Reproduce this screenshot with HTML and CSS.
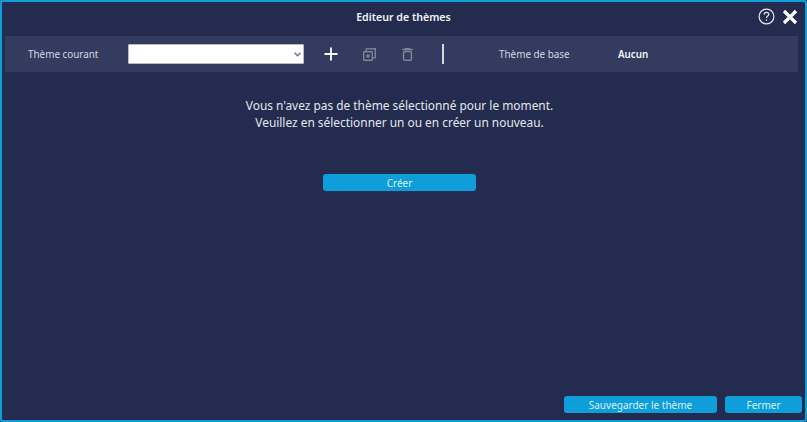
FILE: index.html
```html
<!DOCTYPE html>
<html lang="fr">
<head>
<meta charset="utf-8">
<title>Editeur de thèmes</title>
<link rel="stylesheet" href="styles.css">
</head>
<body>
<div class="dialog">
  <header class="titlebar">
    <h1 class="title">Editeur de thèmes</h1>
    <div class="title-actions">
      <svg class="icon-help" width="17" height="17" viewBox="0 0 17 17" fill="none" stroke="#e6e8ee" stroke-width="1.2" aria-label="Aide">
        <circle cx="8.5" cy="8.5" r="7.4"/>
        <path d="M6.2 6.6c0-1.4 1-2.2 2.3-2.2s2.3.8 2.3 2c0 1.7-2.3 1.7-2.3 3.6"/>
        <path d="M8.5 11.4v1.4"/>
      </svg>
      <svg class="icon-close" width="16" height="16" viewBox="0 0 16 16" fill="none" stroke="#ffffff" stroke-width="3.2" aria-label="Fermer">
        <path d="M2 2l12 12M14 2L2 14"/>
      </svg>
    </div>
  </header>
  <div class="toolbar">
    <span class="label label-current">Thème courant</span>
    <div class="select-wrap">
      <select class="theme-select"><option></option></select>
      <svg class="select-chevron" width="7" height="5" viewBox="0 0 7 5" fill="none" stroke="#6f7280" stroke-width="1.5">
        <path d="M.6.8l2.9 2.9L6.4.8"/>
      </svg>
    </div>
    <svg class="tool tool-add" width="14" height="14" viewBox="0 0 14 14" stroke="#ffffff" stroke-width="1.8" fill="none">
      <path d="M7 .5v13M.5 7h13"/>
    </svg>
    <svg class="tool tool-copy" width="13" height="13" viewBox="0 0 13 13" stroke="#7f8499" stroke-width="1.4" fill="none">
      <rect x=".7" y="3.7" width="8.6" height="8.6" rx=".6"/>
      <path d="M3.2 3V.9l9.1-.2v9.2H10"/>
      <path d="M5 6v4M3 8h4"/>
    </svg>
    <svg class="tool tool-trash" width="11" height="13" viewBox="0 0 11 13" stroke="#7f8499" stroke-width="1.5" fill="none">
      <path d="M.2 1.4h10.6M3.5 1V.4h4V1"/>
      <rect x="1.6" y="3.6" width="7.8" height="8.6" rx="1.2"/>
    </svg>
    <span class="separator"></span>
    <span class="label label-base">Thème de base</span>
    <span class="base-value">Aucun</span>
  </div>
  <main class="content">
    <p class="message">Vous n'avez pas de thème sélectionné pour le moment.<br>Veuillez en sélectionner un ou en créer un nouveau.</p>
    <button class="btn btn-create">Créer</button>
  </main>
  <footer class="footer">
    <button class="btn btn-save">Sauvegarder le thème</button>
    <button class="btn btn-close">Fermer</button>
  </footer>
</div>
</body>
</html>
```
FILE: styles.css
```css
* { box-sizing: border-box; }
html, body { margin: 0; padding: 0; }
body {
  width: 807px;
  height: 422px;
  overflow: hidden;
  font-family: "Noto Sans", "Open Sans", sans-serif;
  background: #232c4f;
}
.dialog {
  width: 807px;
  height: 422px;
  display: flex;
  flex-direction: column;
  background: #232c4f;
  border: 2px solid #0e9fdb;
  border-radius: 3px;
  color: #fff;
}
.titlebar {
  height: 34px;
  flex: none;
  display: flex;
  align-items: center;
  justify-content: center;
  position: relative;
}
.title {
  margin: 0 0 4px;
  font-size: 10.6px;
  font-weight: 600;
  color: #f2f3f6;
}
.title-actions {
  position: absolute;
  right: 7px;
  top: 6px;
  display: flex;
  align-items: center;
  gap: 7px;
}
.toolbar {
  height: 36px;
  flex: none;
  margin: 0 7px 0 3px;
  background: #333b5e;
  display: flex;
  align-items: center;
}
.label {
  font-size: 9.9px;
  color: #d5d7e0;
}
.label-current { margin-left: 23px; width: 100px; }
.select-wrap {
  position: relative;
  width: 176px;
  height: 20px;
  flex: none;
}
.theme-select {
  display: block;
  width: 100%;
  height: 100%;
  appearance: none;
  background: #fff;
  border: 1px solid #b9bcc8;
  border-radius: 1px;
  font-size: 10px;
  font-family: inherit;
}
.select-chevron {
  position: absolute;
  right: 3px;
  top: 8px;
}
.tool { flex: none; }
.tool-add { margin-left: 20px; }
.tool-copy { margin-left: 25px; }
.tool-trash { margin-left: 26px; }
.separator {
  width: 2px;
  height: 20px;
  background: #d5d7e0;
  margin-left: 29px;
}
.label-base { margin-left: 55px; width: 119px; }
.base-value {
  font-size: 9.8px;
  font-weight: 600;
  color: #f2f3f6;
}
.content {
  flex: 1;
  display: flex;
  flex-direction: column;
  align-items: center;
  padding-right: 8px;
}
.message {
  margin: 25px 0 0;
  font-size: 11.9px;
  line-height: 17px;
  text-align: center;
  color: #e4e6ec;
}
.btn {
  background: #0e9fdb;
  border: 0;
  border-radius: 3px;
  color: #d9effa;
  font-family: inherit;
  font-size: 10px;
  height: 17px;
  padding: 0;
}
.btn-create { width: 153px; margin-top: 43px; }
.footer {
  flex: none;
  height: 24px;
  display: flex;
  justify-content: flex-end;
  gap: 8px;
  padding-right: 3px;
}
.btn-save { width: 153px; }
.btn-close { width: 77px; }
```
